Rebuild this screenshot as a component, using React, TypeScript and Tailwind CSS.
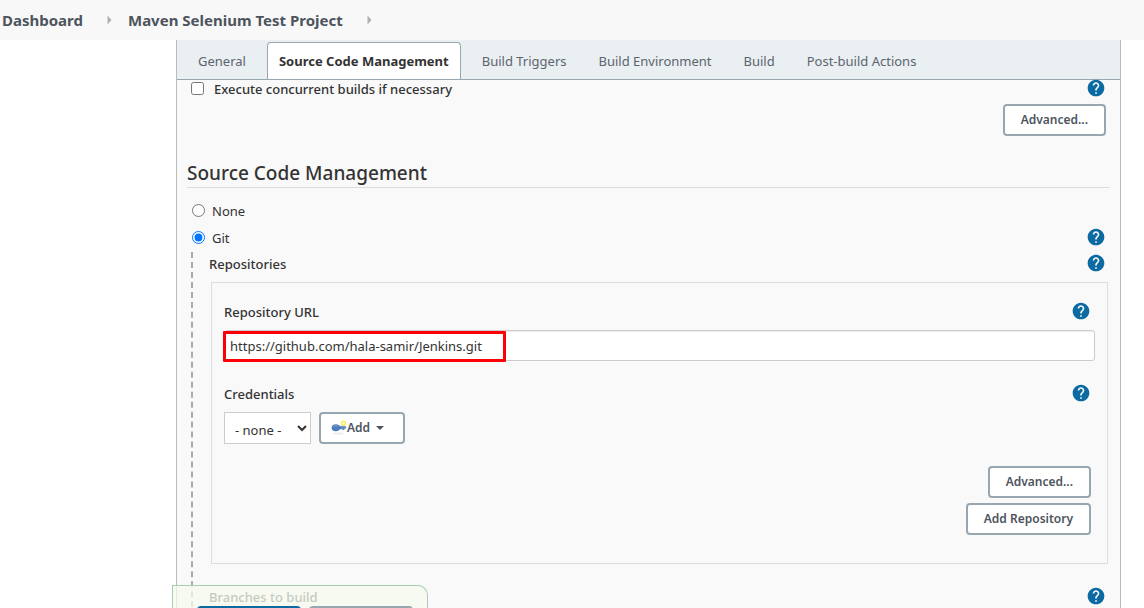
import { useState } from "react";
import type { ReactNode } from "react";
import { MdHelp } from "react-icons/md";

const TABS = [
  "General",
  "Source Code Management",
  "Build Triggers",
  "Build Environment",
  "Build",
  "Post-build Actions",
];

function Separator() {
  return (
    <svg viewBox="0 0 5 10" className="mx-6 h-2.5 w-[5px] shrink-0" aria-hidden="true">
      <path d="M0.5 0.5 4.5 5 0.5 9.5Z" fill="#b0b0b0" />
    </svg>
  );
}

function Help({ topic }: { topic: string }) {
  return (
    <button type="button" aria-label={`Help for ${topic}`} className="shrink-0 text-[#0b6aa2]">
      <MdHelp className="size-5" />
    </button>
  );
}

function OutlineButton({ children }: { children: ReactNode }) {
  return (
    <button
      type="button"
      className="h-8 rounded-sm border-2 border-[#98a6b0] bg-white px-4 text-xs font-semibold text-[#4d545d]"
    >
      {children}
    </button>
  );
}

function KeyIcon() {
  return (
    <svg viewBox="0 0 16 16" className="size-4 shrink-0" aria-hidden="true">
      <ellipse cx="7" cy="13.5" rx="5.5" ry="1" fill="#ececec" />
      <path d="M7 6.2h7.2l.8 1.3-.8 1.3h-1.2v.9h-1.2V9H7Z" fill="#5c8cc4" stroke="#4a78b0" strokeWidth=".5" />
      <ellipse cx="4.8" cy="7.8" rx="3.9" ry="3.2" fill="#4c7fbd" stroke="#3d699f" strokeWidth=".5" />
      <path d="M2.3 7c.8-1.6 3.2-1.8 4.3-.4" stroke="#8fb3dc" strokeWidth=".8" fill="none" />
      <circle cx="12.5" cy="3.2" r="2" fill="#fffbc0" stroke="#f7ee4e" strokeWidth="1.2" />
    </svg>
  );
}

export default function App() {
  const [active, setActive] = useState("Source Code Management");
  const [scm, setScm] = useState("git");
  const [url, setUrl] = useState("https://github.com/hala-samir/Jenkins.git");

  return (
    <div className="flex h-screen flex-col overflow-hidden bg-white font-['Noto_Sans','Open_Sans',sans-serif] text-[13px] leading-5 text-[#333]">
      <nav aria-label="Breadcrumb" className="flex h-10 shrink-0 items-center bg-[#f8f8f8] pl-0.5 text-[15px] font-bold text-[#4d545d]">
        <a href="#dashboard">Dashboard</a>
        <Separator />
        <a href="#project" className="-ml-2">Maven Selenium Test Project</a>
        <Separator />
      </nav>

      <main className="mr-[23px] ml-44 flex-1 overflow-hidden border-x border-[#bbb] bg-[#f9f9f9]">
        <div role="tablist" className="flex h-10 items-end gap-2.5 border-b border-[#98a6b0] bg-[#eaeff2] pl-2.5">
          {TABS.map((tab) => (
            <button
              key={tab}
              type="button"
              role="tab"
              aria-selected={tab === active}
              onClick={() => setActive(tab)}
              className={
                tab === active
                  ? "h-[37px] rounded-t border border-b-0 border-[#98a6b0] bg-white px-[11px] font-bold whitespace-nowrap text-[#333]"
                  : "h-[37px] border border-b-0 border-transparent px-2.5 whitespace-nowrap text-[#5c646e]"
              }
            >
              {tab}
            </button>
          ))}
        </div>

        <form className="pr-2.5 pl-2.5" onSubmit={(e) => e.preventDefault()}>
          <div className="flex h-4 items-center justify-between pr-1 pl-1">
            <label className="flex items-center gap-2.5 font-medium">
              <input type="checkbox" className="size-[13px]" />
              <span className="pt-0.5">Execute concurrent builds if necessary</span>
            </label>
            <Help topic="concurrent builds" />
          </div>
          <div className="mt-2 flex justify-end pr-1">
            <OutlineButton>Advanced...</OutlineButton>
          </div>

          <h2 className="mt-6 border-b border-[#ddd] text-[19px] leading-[27px] font-medium">
            Source Code Management
          </h2>

          <div className="mt-[11px] flex h-[22px] items-center pl-[5px]">
            <label className="flex items-center gap-[7px]">
              <input type="radio" name="scm" checked={scm === "none"} onChange={() => setScm("none")} className="size-[13px]" />
              <span className="pt-0.5">None</span>
            </label>
          </div>
          <div className="mt-[5px] flex h-[22px] items-center justify-between pr-1 pl-[5px]">
            <label className="flex items-center gap-[7px]">
              <input type="radio" name="scm" checked={scm === "git"} onChange={() => setScm("git")} className="size-[13px]" />
              <span className="pt-0.5">Git</span>
            </label>
            <Help topic="Git" />
          </div>

          <div className="mt-1 ml-1 border-l-2 border-dashed border-[#aaa] pb-20 pl-4">
            <div className="flex h-[22px] items-center justify-between pr-1 font-medium">
              <span className="pt-0.5">Repositories</span>
              <Help topic="repositories" />
            </div>

            <section className="mt-2 mr-0.5 ml-0.5 border border-[#ddd] pt-[17px] pr-3 pb-7 pl-3">
              <div className="flex h-[22px] items-center justify-between pr-1 font-medium">
                <label htmlFor="repo-url" className="pt-0.5">Repository URL</label>
                <Help topic="repository URL" />
              </div>
              <div className="relative mt-2">
                <input
                  id="repo-url"
                  type="text"
                  value={url}
                  onChange={(e) => setUrl(e.target.value)}
                  className="block h-[31px] w-full rounded-[3px] border border-[#ccc] bg-white px-[5px] shadow-[inset_0_1px_1px_rgba(0,0,0,0.07)]"
                />
                <div className="pointer-events-none absolute top-px -left-px h-[31px] w-[283px] rounded-[1px] border-3 border-[#fb0007]" />
              </div>

              <div className="mt-[21px] flex h-[22px] items-center justify-between pr-1 font-medium">
                <label htmlFor="credentials" className="pt-0.5">Credentials</label>
                <Help topic="credentials" />
              </div>
              <div className="mt-2 flex gap-2">
                <select id="credentials" className="h-8 w-[87px] border border-[#ccc] bg-white pt-1 pl-1.5">
                  <option>- none -</option>
                </select>
                <button
                  type="button"
                  className="flex h-8 w-[86px] items-center rounded-sm border-2 border-[#98a6b0] bg-white pl-2.5 text-xs font-semibold text-[#4d545d]"
                >
                  <KeyIcon />
                  Add
                  <svg viewBox="0 0 8 4" className="ml-1.5 h-1 w-2" aria-hidden="true">
                    <path d="M0 0h8L4 4Z" fill="#4d545d" />
                  </svg>
                </button>
              </div>

              <div className="mt-[22px] flex flex-col items-end gap-[5px] pr-1">
                <OutlineButton>Advanced...</OutlineButton>
                <OutlineButton>Add Repository</OutlineButton>
              </div>
            </section>

            <div className="mt-[21px] flex h-[22px] items-center justify-between pr-1 font-medium">
              <span className="pt-0.5">Branches to build</span>
              <Help topic="branches to build" />
            </div>
          </div>
        </form>
      </main>

      <div className="fixed bottom-0 left-[172px] flex h-[23px] w-64 items-start gap-2 overflow-hidden rounded-tr-[10px] border border-b-0 border-[#a5cdb5] bg-[#f5f9ee]/75 pt-5 pl-6">
        <button type="button" aria-label="Save" className="h-8 w-[104px] shrink-0 rounded bg-[#0b6aa2]" />
        <button type="button" aria-label="Apply" className="h-8 w-[104px] shrink-0 rounded bg-[#98a6b0]" />
      </div>
    </div>
  );
}
